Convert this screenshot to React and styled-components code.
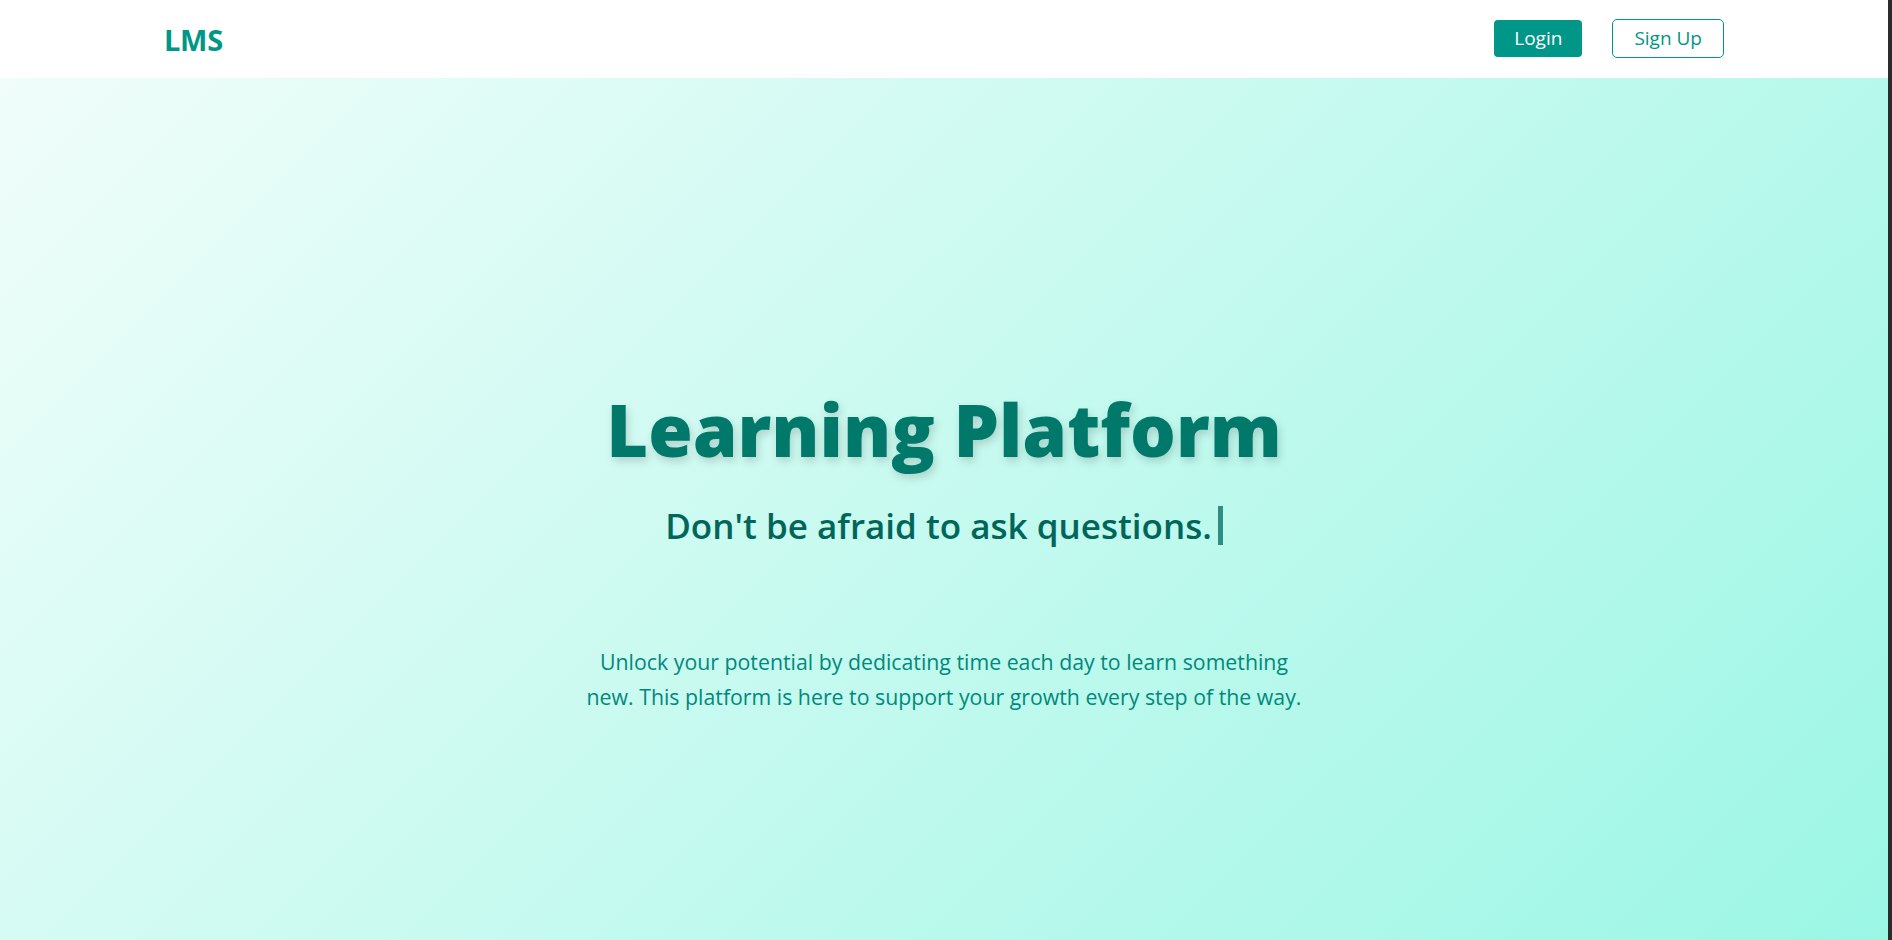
import React from 'react';
import styled, { createGlobalStyle } from 'styled-components';

const GlobalStyle = createGlobalStyle`
  html {
    overflow-y: scroll;
    scrollbar-width: none;
  }
  ::-webkit-scrollbar {
    display: none;
  }
  body {
    margin: 0;
    font-family: 'Open Sans', 'Noto Sans', sans-serif;
    border-right: 4px solid #2b2b2b;
  }
  * {
    box-sizing: border-box;
  }
`;

export default function App() {
  return (
    <Page>
      <GlobalStyle />
      <Header>
        <Nav>
          <Logo>LMS</Logo>
          <Actions>
            <Button primary>Login</Button>
            <Button>Sign Up</Button>
          </Actions>
        </Nav>
      </Header>
      <Hero>
        <Title>Learning Platform</Title>
        <Subtitle>
          Don't be afraid to ask questions.
          <Cursor />
        </Subtitle>
        <Blurb>
          Unlock your potential by dedicating time each day to learn something
          new. This platform is here to support your growth every step of the
          way.
        </Blurb>
      </Hero>
    </Page>
  );
}

const Page = styled.div`
  min-height: 100vh;
`;

const Header = styled.header`
  height: 78px;
  background-color: white;
`;

const Nav = styled.nav`
  display: flex;
  align-items: center;
  justify-content: space-between;
  max-width: 1560px;
  height: 100%;
  margin: 0 auto;
`;

const Logo = styled.div`
  color: #009688;
  font-size: 29px;
  font-weight: 700;
  letter-spacing: -0.3px;
`;

const Actions = styled.div`
  display: flex;
  align-items: center;
  gap: 30px;
  margin-top: -2px;
`;

const Button = styled.button`
  height: ${(p) => (p.primary ? '37px' : '39px')};
  padding: 0 ${(p) => (p.primary ? '20px' : '21px')};
  font-family: inherit;
  font-size: 19px;
  border-radius: ${(p) => (p.primary ? '4px' : '5px')};
  border: ${(p) => (p.primary ? 'none' : '1px solid #009688')};
  background-color: ${(p) => (p.primary ? '#009688' : 'white')};
  color: ${(p) => (p.primary ? 'white' : '#009688')};
  cursor: pointer;
`;

const Hero = styled.main`
  display: flex;
  flex-direction: column;
  align-items: center;
  justify-content: center;
  min-height: 100vh;
  padding-top: 4px;
  text-align: center;
  background: linear-gradient(135deg, #f0fdfa 0%, #99f6e4 100%);
`;

const Title = styled.h1`
  margin: 0;
  color: #00796b;
  font-size: 72px;
  font-weight: 800;
  line-height: 1.2;
  text-shadow: 2px 4px 8px rgba(0, 0, 0, 0.16);
`;

const Subtitle = styled.h2`
  display: flex;
  align-items: center;
  margin: 29px 0 0;
  color: #00665a;
  font-size: 35px;
  font-weight: 600;
  line-height: 1.4;
`;

const Cursor = styled.span`
  display: inline-block;
  width: 5px;
  height: 39px;
  margin-left: 6px;
  background-color: rgba(0, 105, 92, 0.75);
`;

const Blurb = styled.p`
  max-width: 726px;
  margin: 94px 0 0;
  color: #00897b;
  font-size: 21.3px;
  line-height: 35px;
`;
